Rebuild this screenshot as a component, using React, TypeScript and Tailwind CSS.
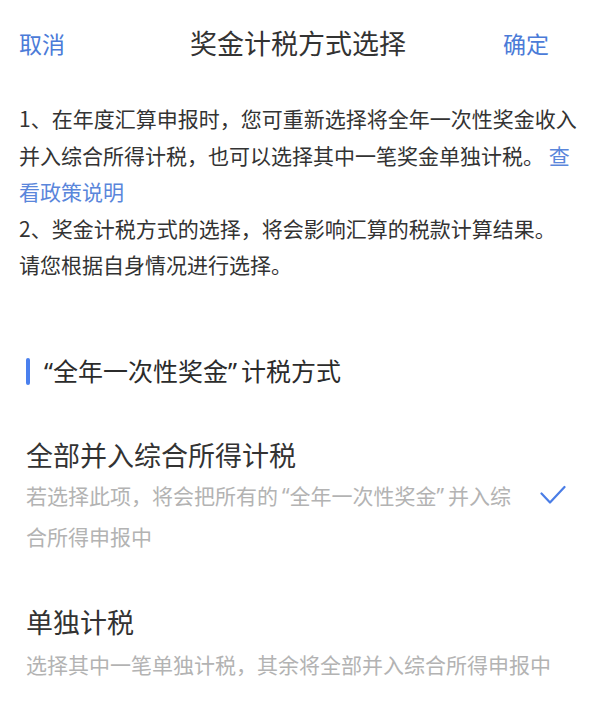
import React from "react";

const QL = () => (
  <span className="pl-[4px]" style={{ fontFamily: '"Noto Sans", sans-serif' }}>
    “
  </span>
);
const QR = () => (
  <span className="pr-[4px]" style={{ fontFamily: '"Noto Sans", sans-serif' }}>
    ”
  </span>
);

export default function App() {
  return (
    <div
      className="w-[596px] h-[701px] bg-white overflow-hidden text-[#333333]"
      style={{ fontFamily: '"Noto Sans CJK SC", "Noto Sans", sans-serif' }}
    >
      {/* Header */}
      <div className="grid grid-cols-[1fr_auto_1fr] items-center h-[86px]">
        <div className="pl-[19px] text-[23px] text-[#4b7bd8]">取消</div>
        <div className="text-[27px] text-[#333333]">奖金计税方式选择</div>
        <div className="flex justify-end pr-[47px] text-[23px] text-[#4b7bd8]">确定</div>
      </div>

      {/* Notice */}
      <div className="mt-[14px] px-[19px] text-[21px] leading-[36.5px] text-[#333333]">
        <div className="whitespace-nowrap">1、在年度汇算申报时，您可重新选择将全年一次性奖金收入</div>
        <div className="whitespace-nowrap">
          并入综合所得计税，也可以选择其中一笔奖金单独计税。 <span className="text-[#5a86db]">查</span>
        </div>
        <div className="whitespace-nowrap text-[#5a86db]">看政策说明</div>
        <div className="whitespace-nowrap">2、奖金计税方式的选择，将会影响汇算的税款计算结果。</div>
        <div className="whitespace-nowrap">请您根据自身情况进行选择。</div>
      </div>

      {/* Section heading */}
      <div className="mt-[71px] flex items-center h-[36px] pl-[26px]">
        <div className="w-[4px] h-[27px] rounded-full bg-[#4a80ee]" />
        <div className="ml-[10px] text-[25px] text-[#2b2b2b]">
          <QL />全年一次性奖金<QR />计税方式
        </div>
      </div>

      {/* Option 1 */}
      <div className="mt-[45px] pl-[26px]">
        <div className="text-[27px] leading-[40px] text-[#333333]">全部并入综合所得计税</div>
        <div className="flex items-start">
          <div className="w-[500px] text-[21px] leading-[40px] text-[#b3b3b3]">
            <div className="whitespace-nowrap">
              若选择此项，将会把所有的<QL />全年一次性奖金<QR />并入综
            </div>
            <div className="whitespace-nowrap">合所得申报中</div>
          </div>
          <svg
            className="mt-[10px] ml-[14px]"
            width="26"
            height="20"
            viewBox="0 0 26 20"
            fill="none"
          >
            <path
              d="M1.5 8.5 L10 17.5 L24.5 2"
              stroke="#4a7de6"
              strokeWidth="2.2"
              strokeLinecap="round"
              strokeLinejoin="round"
            />
          </svg>
        </div>
      </div>

      {/* Option 2 */}
      <div className="mt-[46px] pl-[26px]">
        <div className="text-[27px] leading-[40px] text-[#333333]">单独计税</div>
        <div className="whitespace-nowrap text-[21px] leading-[44px] text-[#b3b3b3]">
          选择其中一笔单独计税，其余将全部并入综合所得申报中
        </div>
      </div>
    </div>
  );
}
